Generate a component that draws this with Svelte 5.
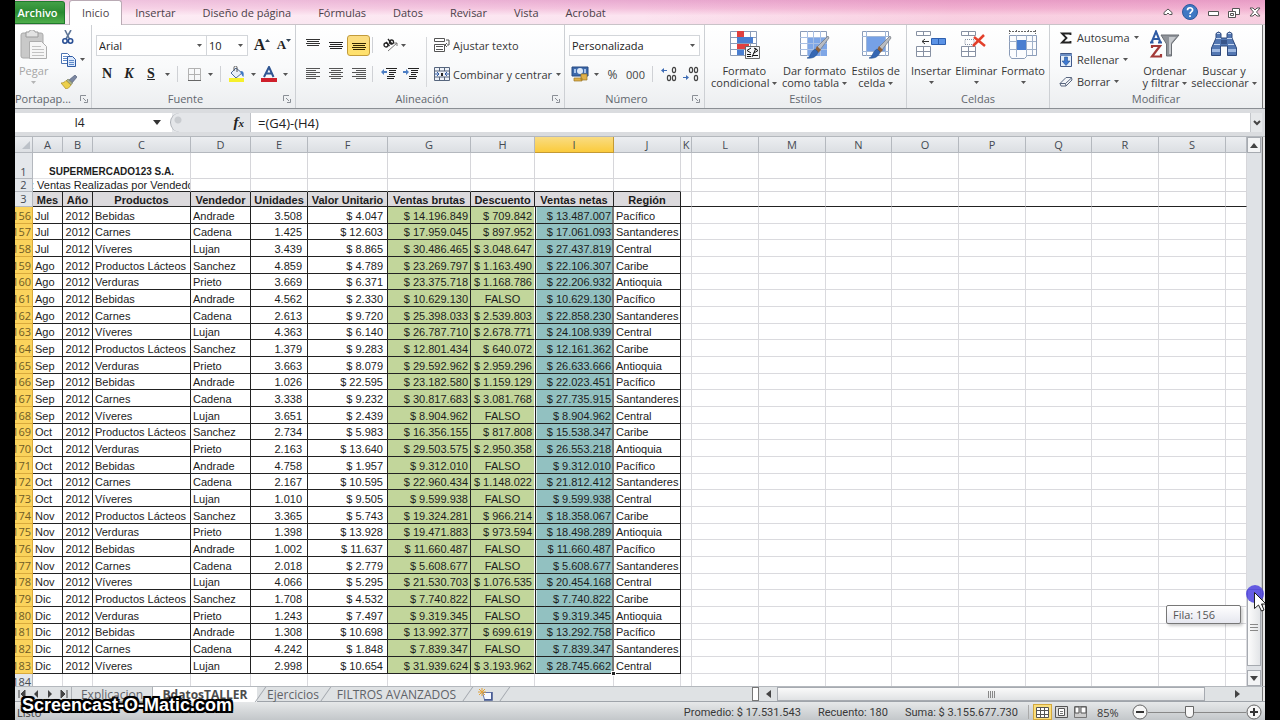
<script>
  const tabs = ['Insertar', 'Diseño de página', 'Fórmulas', 'Datos', 'Revisar', 'Vista', 'Acrobat'];
  const columns = 'ABCDEFGHIJKLMNOPQRS'.split('');
  const blanks = Array.from({ length: 10 });
  const headings = ['Mes', 'Año', 'Productos', 'Vendedor', 'Unidades', 'Valor Unitario', 'Ventas brutas', 'Descuento', 'Ventas netas', 'Región'];

  const products = {
    B: ['Bebidas', 'Andrade', 'Pacífico'],
    C: ['Carnes', 'Cadena', 'Santanderes'],
    V: ['Víveres', 'Lujan', 'Central'],
    L: ['Productos Lácteos', 'Sanchez', 'Caribe'],
    R: ['Verduras', 'Prieto', 'Antioquia']
  };

  const rows = `Jul|B|3.508|4.047|14.196.849|709.842|13.487.007
Jul|C|1.425|12.603|17.959.045|897.952|17.061.093
Jul|V|3.439|8.865|30.486.465|3.048.647|27.437.819
Ago|L|4.859|4.789|23.269.797|1.163.490|22.106.307
Ago|R|3.669|6.371|23.375.718|1.168.786|22.206.932
Ago|B|4.562|2.330|10.629.130||10.629.130
Ago|C|2.613|9.720|25.398.033|2.539.803|22.858.230
Ago|V|4.363|6.140|26.787.710|2.678.771|24.108.939
Sep|L|1.379|9.283|12.801.434|640.072|12.161.362
Sep|R|3.663|8.079|29.592.962|2.959.296|26.633.666
Sep|B|1.026|22.595|23.182.580|1.159.129|22.023.451
Sep|C|3.338|9.232|30.817.683|3.081.768|27.735.915
Sep|V|3.651|2.439|8.904.962||8.904.962
Oct|L|2.734|5.983|16.356.155|817.808|15.538.347
Oct|R|2.163|13.640|29.503.575|2.950.358|26.553.218
Oct|B|4.758|1.957|9.312.010||9.312.010
Oct|C|2.167|10.595|22.960.434|1.148.022|21.812.412
Oct|V|1.010|9.505|9.599.938||9.599.938
Nov|L|3.365|5.743|19.324.281|966.214|18.358.067
Nov|R|1.398|13.928|19.471.883|973.594|18.498.289
Nov|B|1.002|11.637|11.660.487||11.660.487
Nov|C|2.018|2.779|5.608.677||5.608.677
Nov|V|4.066|5.295|21.530.703|1.076.535|20.454.168
Dic|L|1.708|4.532|7.740.822||7.740.822
Dic|R|1.243|7.497|9.319.345||9.319.345
Dic|B|1.308|10.698|13.992.377|699.619|13.292.758
Dic|C|4.242|1.848|7.839.347||7.839.347
Dic|V|2.998|10.654|31.939.624|3.193.962|28.745.662`
    .split('\n')
    .map((line, i) => {
      const [month, key, units, price, gross, discount, net] = line.split('|');
      const [product, seller, region] = products[key];
      return { n: 156 + i, month, product, seller, region, units, price, gross, discount, net };
    });
</script>

{#snippet caret()}
  <svg class="caret" width="5" height="3" viewBox="0 0 5 3" aria-hidden="true"><path d="M0 0h5L2.5 3z" fill="#555" /></svg>
{/snippet}

{#snippet lines(spans, color)}
  <svg width="14" height="12" viewBox="0 0 14 12" aria-hidden="true">
    {#each spans as [x, y, w]}<rect {x} {y} width={w} height="1" fill={color} />{/each}
  </svg>
{/snippet}

{#snippet launcher(name)}
  <button class="launcher" aria-label={name}>
    <svg width="8" height="8" viewBox="0 0 8 8"><path d="M.5 6V.5H6M3 3l3 3M7.5 4v3.5H4" fill="none" stroke="#8a8f96" /></svg>
  </button>
{/snippet}

{#snippet sheetIcon(kind)}
  <svg width="32" height="30" viewBox="0 0 32 30" aria-hidden="true">
    <path d="M2.500 1.500h26v24h-26z" fill="#fff" stroke="#8b9cb8" />
    {#if kind === 'cond'}
      <path d="M2 7.500h27M2 13.500h27M2 19.500h27M9.500 1v25M15.500 1v25M22.500 1v25" stroke="#8b9cb8" />
      <path d="M9 1h7v6H9zM9 14h12v5H9z" fill="#e0403f" />
      <path d="M9 7h16v6H9zM9 20h7v5H9z" fill="#4a7ed0" />
      <path d="M17.500 16.500h14v12h-14z" fill="#f5f6f8" stroke="#666" />
      <path d="M23 18l-4 2.500 4 2.500M19 24.500h4M19 26.500h4M26 18l4 2.500-4 2.500M25 25.500h5M24 27l4-9" stroke="#111" fill="none" />
    {:else if kind === 'table'}
      <path d="M9 7h20v19H9z" fill="#7ea6e6" />
      <path d="M2 7.500h27M2 13.500h27M2 19.500h27M9.500 1v25M15.500 1v25M22.500 1v25" stroke="#a9c0e4" />
    {:else}
      <path d="M2 6.500h27M2 21.500h27M6.500 1v25M25.500 1v25" stroke="#9fb6d8" />
      <path d="M7 7h18v14H7z" fill="#76a1e6" />
    {/if}
    {#if kind !== 'cond'}
      <path d="M30 6l1 2-9 12-3-3z" fill="#b9bcc2" stroke="#70757d" stroke-width=".7" />
      <path d="M19 16l4 4-3 3-3-3z" fill="#8f6038" />
      <path d="M17 19l3 3c-1 4-5 7-11 6 4-1 3-6 8-9z" fill="#3567b3" stroke="#24508f" stroke-width=".6" />
    {/if}
  </svg>
{/snippet}

{#snippet cellIcon(kind)}
  <svg width="32" height="30" viewBox="0 0 32 30" aria-hidden="true">
    {#if kind === 'format'}
      <path d="M2.500 0v4M28.500 0v4M2 1.500h27M9.500 0v3M21.500 0v3" stroke="#666" stroke-dasharray="2 1" />
      <path d="M2.500 5.500h27v20h-9l-3 3h-13l-2-3z" fill="#fbfcfe" stroke="#8b9cb8" />
      <path d="M2 11.500h27M2 19.500h27M9.500 5v22M19.500 5v22M25.500 5v20" stroke="#9fb0c9" />
      <path d="M10 10h9v10h-9z" fill="#4a7ed0" />
    {:else}
      <path d="M1.500 1.500h14v4h-14zM1.500 16.500h14v10h-14zM1 21.500h15M8.500 1v5M8.500 16v11" fill="#fff" stroke="#8791a3" />
      {#if kind === 'insert'}
        <path d="M16.500 8.500h14v6h-14zM23.500 8v7" fill="#5b93e6" stroke="#2e5fae" />
        <path d="M7 11.500h7M10 9l-3 2.500 3 2.500" fill="none" stroke="#333" />
      {:else}
        <path d="M5 9.500h9v5H5z" fill="none" stroke="#8791a3" stroke-dasharray="1 1" />
        <path d="M14 7l11 9M24 5L13 16" stroke="#e3402b" stroke-width="2.500" />
      {/if}
    {/if}
  </svg>
{/snippet}

<div class="window">
  <header class="tabs">
    <button class="file">Archivo</button>
    <nav>
      <button class="tab active">Inicio</button>
      {#each tabs as tab}<button class="tab">{tab}</button>{/each}
    </nav>
    <div class="controls">
      <button aria-label="Minimizar la cinta"><svg width="10" height="8" viewBox="0 0 10 8"><path d="M1 6.500V4.500L5 1l4 3.500v2H6.500L5 5 3.500 6.500z" fill="#fff" stroke="#555" /></svg></button>
      <button aria-label="Ayuda"><svg width="16" height="16" viewBox="0 0 16 16"><circle cx="8" cy="8" r="7.500" fill="#3f78c3" stroke="#2e5a9c" /><path d="M5.500 6.200C5.500 3 10.600 3 10.600 6c0 2-2.500 1.800-2.500 4M8 11.300v1.700" fill="none" stroke="#fff" stroke-width="1.700" /></svg></button>
      <button aria-label="Minimizar"><svg width="12" height="10" viewBox="0 0 12 10"><path d="M1.500 4.500h10v4h-10z" fill="#fff" stroke="#555" /></svg></button>
      <button aria-label="Restaurar"><svg width="12" height="11" viewBox="0 0 12 11"><path d="M4.500 1.500h7v6h-7z" fill="#fff" stroke="#555" /><path d="M.5 4.500h7v6h-7z" fill="#fff" stroke="#555" /><path d="M2.500 6.500h3v2h-3z" stroke="#555" fill="none" /></svg></button>
      <button aria-label="Cerrar"><svg width="12" height="10" viewBox="0 0 12 10"><path d="M1 1h3l2 2 2-2h3L7.500 5 11 9H8L6 7 4 9H1l3.500-4z" fill="#fff" stroke="#555" /></svg></button>
    </div>
  </header>

  <section class="ribbon">
    <div class="group clipboard">
      <div class="body">
        <button class="big dim">
          <svg width="28" height="30" viewBox="0 0 28 30" aria-hidden="true"><rect x="1" y="3" width="22" height="25" rx="2" fill="#c9c9c9" stroke="#aaa" /><path d="M6 2h3c0-3 6-3 6 0h3v5H6z" fill="#e3e3e3" stroke="#9b9b9b" /><path d="M9.500 11.500h12l5 5v12h-17z" fill="#f6f6f6" stroke="#adadad" /><path d="M12 16.500h9M12 19.500h12M12 22.500h12M12 25.500h12" stroke="#c2c2c2" /></svg>
          <span>Pegar</span>{@render caret()}
        </button>
        <div class="stack clip">
          <button aria-label="Cortar"><svg width="14" height="15" viewBox="0 0 14 15"><path d="M4 0l4.500 9M10 0L5 9" stroke="#5f7697" stroke-width="1.600" /><circle cx="4" cy="11" r="2.200" fill="none" stroke="#294f94" stroke-width="1.600" /><circle cx="9.500" cy="11" r="2.200" fill="none" stroke="#294f94" stroke-width="1.600" /></svg></button>
          <button aria-label="Copiar"><svg width="15" height="14" viewBox="0 0 15 14"><path d="M.5.5h6l2 2v8h-8z" fill="#fff" stroke="#4d74b2" /><path d="M6.500 3.500h5l3 3v7h-8z" fill="#dbe8fb" stroke="#2f5ba4" /><path d="M2 3.500h4M2 5.500h4M2 7.500h4M8 7.500h5M8 9.500h5M8 11.500h5" stroke="#5f8ac9" /></svg>{@render caret()}</button>
          <button aria-label="Copiar formato"><svg width="16" height="14" viewBox="0 0 16 14"><path d="M14 0l2 2-5 6-3-3z" fill="#7a86a0" stroke="#4b5570" stroke-width=".6" /><path d="M7 4l4.500 4-1.500 2-5-4z" fill="#a9b08c" stroke="#777b55" stroke-width=".6" /><path d="M5 5.500L10 10c-1 2-3 3.500-5 4L0 8c2 0 4-1 5-2.500z" fill="#ecd04c" stroke="#a98c2a" stroke-width=".7" /></svg></button>
        </div>
      </div>
      <footer><span class="cut">Portapap...</span>{@render launcher('Portapapeles')}</footer>
    </div>

    <div class="group font">
      <div class="body rows">
        <div class="row">
          <label class="combo family"><select aria-label="Fuente"><option>Arial</option></select>{@render caret()}</label>
          <label class="combo size"><select aria-label="Tamaño"><option>10</option></select>{@render caret()}</label>
          <button class="tool serif grow" aria-label="Aumentar tamaño">A<svg width="5" height="12" viewBox="0 0 5 12"><path d="M0 3h5L2.500 0z" fill="#345" /></svg></button>
          <button class="tool serif shrink" aria-label="Disminuir tamaño">A<svg width="5" height="12" viewBox="0 0 5 12"><path d="M0 0h5L2.500 3z" fill="#345" /></svg></button>
        </div>
        <div class="row second">
          <button class="tool serif">N</button>
          <button class="tool serif italic">K</button>
          <button class="tool serif under">S</button>
          <span class="drop">{@render caret()}</span><i class="sep"></i>
          <button class="tool" aria-label="Bordes"><svg width="13" height="13" viewBox="0 0 13 13"><path d="M.5.5h12v12H.5zM6.500 0v12M0 6.500h12" fill="none" stroke="#b2b2b2" /><path d="M0 12.500h13" stroke="#666" /></svg></button>
          <span class="drop">{@render caret()}</span><i class="sep"></i>
          <button class="tool" aria-label="Color de relleno"><svg width="16" height="16" viewBox="0 0 16 16"><path d="M2 7l5-5 6 5-6 5z" fill="#e8eef7" stroke="#4e6b96" /><path d="M5 5V1.500c0-2 3-2 3 0V6" fill="none" stroke="#555" /><path d="M12 5c3 0 3 3 2.500 6-2-1-1.500-3-3-4z" fill="#3f78c3" /><path d="M0 12h15v4H0z" fill="#f6f02c" /></svg></button>
          <span class="drop">{@render caret()}</span>
          <button class="tool" aria-label="Color de fuente"><svg width="16" height="16" viewBox="0 0 16 16"><path d="M3 11L8 1l4.500 10M5 7.500h6" fill="none" stroke="#2f5592" stroke-width="2" /><path d="M0 12h16v4H0z" fill="#cf1f2b" /></svg></button>
          <span class="drop">{@render caret()}</span>
        </div>
      </div>
      <footer><span>Fuente</span>{@render launcher('Fuente')}</footer>
    </div>

    <div class="group align">
      <div class="body">
        <div class="rows">
          <div class="row">
            <button class="tool wide up" aria-label="Alinear arriba">{@render lines([[0, 1, 14], [1, 3, 12], [0, 5, 14], [1, 7, 12]], '#333')}</button>
            <button class="tool wide" aria-label="Alinear en el medio">{@render lines([[0, 3, 14], [1, 5, 12], [0, 7, 14], [1, 9, 12]], '#222')}</button>
            <button class="tool wide on" aria-label="Alinear abajo">{@render lines([[0, 4, 14], [1, 6, 12], [0, 8, 14], [1, 10, 12]], '#332600')}</button>
            <i class="sep slim"></i>
            <button class="tool orient" aria-label="Orientación"><svg width="16" height="14" viewBox="0 0 16 14"><path d="M5 13L14 5M14 5h-3M14 5v3" stroke="#777" fill="none" /><circle cx="3" cy="7" r="2" fill="none" stroke="#222" stroke-width="1.300" /><path d="M3 4l3.500 4M5 1l4 5" stroke="#222" stroke-width="1.300" /><circle cx="8.500" cy="4" r="2" fill="none" stroke="#222" stroke-width="1.300" /></svg>{@render caret()}</button>
          </div>
          <div class="row second">
            <button class="tool wide" aria-label="Izquierda">{@render lines([[0, 0, 14], [0, 2, 10], [0, 4, 14], [0, 6, 10], [0, 8, 14], [0, 10, 10]], '#555')}</button>
            <button class="tool wide" aria-label="Centrar">{@render lines([[0, 0, 14], [2, 2, 10], [0, 4, 14], [2, 6, 10], [0, 8, 14], [2, 10, 10]], '#555')}</button>
            <button class="tool wide" aria-label="Derecha">{@render lines([[0, 0, 14], [4, 2, 10], [0, 4, 14], [4, 6, 10], [0, 8, 14], [4, 10, 10]], '#555')}</button>
            <i class="sep slim"></i>
            {#each ['Disminuir sangría', 'Aumentar sangría'] as name, i}
              <button class="tool indent" aria-label={name}><svg width="16" height="14" viewBox="0 0 16 14"><path d="M5 1.500h11M8 3.500h7M8 5.500h7M8 7.500h5M6 9.500h8M6 11.500h7" stroke="#222" /><path d={i ? 'M0 4h3V2l3 3-3 3V6H0z' : 'M6 4H3V2L0 5l3 3V6h3z'} fill="#4c7ec4" /></svg></button>
            {/each}
          </div>
        </div>
        <i class="divider"></i>
        <div class="rows">
          <button class="row text"><svg width="16" height="16" viewBox="0 0 16 16" aria-hidden="true"><path d="M.5 1.500h10v3H.5zM.5 7.500h10v7H.5z" fill="#fff" stroke="#555" /><path d="M2 9.500h7M2 12.500h7M12 3h3v5h-2M13 6l-2 2 2 2" fill="none" stroke="#555" /></svg>Ajustar texto</button>
          <button class="row second text"><svg width="16" height="16" viewBox="0 0 16 16" aria-hidden="true"><path d="M.5 1.500h15v13H.5z" fill="#eef2f8" stroke="#56657d" /><path d="M5.500 1v4M10.500 1v4M5.500 11v4M10.500 11v4M0 5h16M0 11h16" stroke="#56657d" /><path d="M1 8h4M3 6l2 2-2 2M15 8h-4M13 6l-2 2 2 2" stroke="#2f5ba4" fill="none" /><path d="M7 7h2v3H7z" fill="#222" /></svg>Combinar y centrar<span class="drop">{@render caret()}</span></button>
        </div>
      </div>
      <footer><span>Alineación</span>{@render launcher('Alineación')}</footer>
    </div>

    <div class="group number">
      <div class="body rows">
        <div class="row"><label class="combo fmt"><select aria-label="Formato de número"><option>Personalizada</option></select>{@render caret()}</label></div>
        <div class="row second">
          <button class="tool" aria-label="Moneda"><svg width="18" height="16" viewBox="0 0 18 16"><path d="M1 1h16v9H1z" fill="#3d69ab" stroke="#264a82" /><ellipse cx="9" cy="5" rx="3" ry="3" fill="#dce8f8" /><path d="M3 3h2v4H3zM13 3h2v4h-2z" fill="#a9c4ea" /><path d="M10 8h6v6h-6zM3 12h8v3H3z" fill="#dfb04a" stroke="#9b7523" stroke-width=".7" /></svg></button>
          <span class="drop">{@render caret()}</span>
          <button class="tool wide percentage">%</button>
          <button class="tool wide thousands">000</button>
          <i class="sep"></i>
          {#each ['Aumentar decimales', 'Disminuir decimales'] as name, i}
            <button class="tool" aria-label={name}><svg width="16" height="16" viewBox="0 0 16 16"><path d={i ? 'M0 11h3V9l3 2.500L3 14v-2H0z' : 'M6 4H3V2L0 4.500 3 7V5h3z'} fill="#3e6cb5" /><g fill="none" stroke="#444" stroke-width="1.200"><ellipse cx="13" cy="4" rx="1.600" ry="2.600" /><ellipse cx="13" cy="12" rx="1.600" ry="2.600" />{#if i}<ellipse cx="8" cy="4" rx="1.600" ry="2.600" />{:else}<ellipse cx="8" cy="12" rx="1.600" ry="2.600" />{/if}</g></svg></button>
          {/each}
        </div>
      </div>
      <footer><span>Número</span>{@render launcher('Número')}</footer>
    </div>

    <div class="group styles">
      <div class="body">
        <button class="big">{@render sheetIcon('cond')}<span>Formato</span><span>condicional {@render caret()}</span></button>
        <button class="big">{@render sheetIcon('table')}<span>Dar formato</span><span>como tabla {@render caret()}</span></button>
        <button class="big">{@render sheetIcon('style')}<span>Estilos de</span><span>celda {@render caret()}</span></button>
      </div>
      <footer><span>Estilos</span></footer>
    </div>

    <div class="group cells">
      <div class="body">
        <button class="big">{@render cellIcon('insert')}<span>Insertar</span>{@render caret()}</button>
        <button class="big">{@render cellIcon('delete')}<span>Eliminar</span>{@render caret()}</button>
        <button class="big">{@render cellIcon('format')}<span>Formato</span>{@render caret()}</button>
      </div>
      <footer><span>Celdas</span></footer>
    </div>

    <div class="group edit">
      <div class="body">
        <div class="stack">
          <button><svg width="14" height="14" viewBox="0 0 14 14" aria-hidden="true"><path d="M11.500 4V2.500H3L7.500 7 3 11.500h8.500V10" fill="none" stroke="#222" stroke-width="1.800" /></svg>Autosuma {@render caret()}</button>
          <button><svg width="14" height="16" viewBox="0 0 14 16" aria-hidden="true"><path d="M1.500 1.500h11v13h-11z" fill="#e6effb" stroke="#41598a" /><path d="M1 2h12v2H1z" fill="#6d8fc4" /><path d="M5.500 5h3v4h2.500L7 13.500 3 9h2.500z" fill="#3f78d0" stroke="#24508f" stroke-width=".6" /></svg>Rellenar {@render caret()}</button>
          <button><svg width="14" height="14" viewBox="0 0 14 14" aria-hidden="true"><path d="M1 8.500L7 2.500h5.500L13 5l-6 6H2z" fill="#f3f5f8" stroke="#5a6780" /><path d="M1 8.500h5.500L12.500 3M6.500 8.500l.5 2.500" fill="none" stroke="#5a6780" /></svg>Borrar {@render caret()}</button>
        </div>
        <button class="big sort">
          <svg width="32" height="30" viewBox="0 0 32 30" aria-hidden="true"><path d="M12 5h18L22.500 14v12h-5V14z" fill="#8f9399" stroke="#6a6e74" /><path d="M20 7h7l-5 6v11h-2z" fill="#c7cace" /><path d="M2.500 12.500L7 1.500l4.500 11M4 9h6M1 12.500h3.500M9 12.500h4" fill="none" stroke="#2f5ba4" stroke-width="2" /><path d="M3 18v-2h8L3 26.500h9V24" fill="none" stroke="#a33a38" stroke-width="2.200" /></svg>
          <span>Ordenar</span><span>y filtrar {@render caret()}</span>
        </button>
        <button class="big find">
          <svg width="32" height="30" viewBox="0 0 32 30" aria-hidden="true"><path d="M8 3.500q2.500-3 5 0V8h6V3.500q2.500-3 5 0V8l4.500 10v7.500h-9V16h-7v9.500h-9V18L8 8z" fill="#5377b2" stroke="#2f4a7c" /><path d="M8 8.500h5M19 8.500h5M9 3.500h3M20 3.500h3M6 14.500h6M20 14.500h6" stroke="#c4d5ef" /><path d="M4 19h8v3H4zM20 19h8v3h-8z" fill="#9fb9e2" /><path d="M13 10h6v4h-6z" fill="#38558a" /></svg>
          <span>Buscar y</span><span>seleccionar {@render caret()}</span>
        </button>
      </div>
      <footer><span>Modificar</span></footer>
    </div>
    <div class="edge"></div>
  </section>

  <section class="formula">
    <label class="name"><input value="I4" aria-label="Cuadro de nombres" /><svg width="8" height="5" viewBox="0 0 8 5" aria-hidden="true"><path d="M0 0h8L4 5z" fill="#333" /></svg></label>
    <div class="fx"><i></i><button>f<small>x</small></button></div>
    <input class="expr" value="=(G4)-(H4)" aria-label="Barra de fórmulas" />
    <button class="expand" aria-label="Expandir"><svg width="8" height="6" viewBox="0 0 8 6"><path d="M1 1l3 3 3-3" fill="none" stroke="#444" stroke-width="2" /></svg></button>
  </section>

  <section class="sheet">
    <div class="grid">
      <table>
        <colgroup>
          <col class="rh" />
          {#each columns as c}<col class="c{c}" />{/each}
          <col />
        </colgroup>
        <thead>
          <tr>
            <th class="corner"><svg width="8" height="8" viewBox="0 0 8 8" aria-hidden="true"><path d="M8 0v8H0z" fill="#bcc1c8" /></svg></th>
            {#each columns as c}<th class:picked={c === 'I'}>{c}</th>{/each}
            <th></th>
          </tr>
        </thead>
        <tbody>
          <tr class="r1"><th>1</th><td colspan="3" class="title">SUPERMERCADO123 S.A.</td>{#each columns.slice(3) as c}<td></td>{/each}<td></td></tr>
          <tr class="r2"><th>2</th><td colspan="3" class="subtitle">: Ventas Realizadas por Vendedo</td>{#each columns.slice(3) as c}<td></td>{/each}<td></td></tr>
          <tr class="r3"><th>3</th>{#each headings as h}<td class="head">{h}</td>{/each}{#each blanks as b}<td></td>{/each}</tr>
        </tbody>
        <tbody class="data">
          {#each rows as r}
            <tr>
              <th><div>{r.n}</div></th>
              <td>{r.month}</td>
              <td class="num">2012</td>
              <td>{r.product}</td>
              <td>{r.seller}</td>
              <td class="num units">{r.units}</td>
              <td class="num price">$ {r.price}</td>
              <td class="num green">$ {r.gross}</td>
              <td class="num green" class:falso={!r.discount}>{r.discount ? `$ ${r.discount}` : 'FALSO'}</td>
              <td class="num teal">$ {r.net}</td>
              <td>{r.region}</td>
              {#each blanks as b}<td class="blank"></td>{/each}
            </tr>
          {/each}
          <tr class="after"><th><div>184</div></th>{#each headings as h}<td class="blank"></td>{/each}{#each blanks as b}<td class="blank"></td>{/each}</tr>
        </tbody>
      </table>
      <span class="handle"></span>
    </div>
    <div class="vscroll">
      <button aria-label="Subir"><svg width="8" height="5" viewBox="0 0 8 5"><path d="M0 5h8L4 0z" fill="#444" /></svg></button>
      <div class="track"><div class="thumb"><i></i><i></i><i></i></div></div>
      <button aria-label="Bajar"><svg width="8" height="5" viewBox="0 0 8 5"><path d="M0 0h8L4 5z" fill="#444" /></svg></button>
    </div>
    <div class="edge"></div>
    <div class="tip">Fila: 156</div>
    <svg class="pointer" width="22" height="28" viewBox="0 0 22 28" aria-hidden="true"><circle cx="11" cy="9" r="9" fill="#4338e0" opacity=".8" /><path d="M10.500 7.500v16l4-3.500 3 6 2.500-1-2.500-6H22z" fill="#fff" stroke="#222" /></svg>
  </section>

  <section class="books">
    <div class="nav">
      {#each ['M1 1v8M7 1L3 5l4 4z', 'M6 1L2 5l4 4z', 'M2 1l4 4-4 4z', 'M7 1v8M1 1l4 4-4 4z'] as d, i}
        <button aria-label={['Primera', 'Anterior', 'Siguiente', 'Última'][i]}><svg width="8" height="10" viewBox="0 0 8 10"><path {d} fill="#444" stroke={i % 3 ? 'none' : '#444'} /></svg></button>
      {/each}
    </div>
    <button class="book first">Explicacion</button>
    <button class="book current">BdatosTALLER</button>
    <i class="slash"></i>
    <button class="book third">Ejercicios</button>
    <i class="slash"></i>
    <button class="book fourth">FILTROS AVANZADOS</button>
    <i class="slash"></i>
    <button class="new" aria-label="Insertar hoja"><svg width="16" height="13" viewBox="0 0 16 13"><path d="M4.500 4.500h9v7h-7z" fill="#f5f8ff" stroke="#6477ad" /><path d="M14 4v8H6" stroke="#42558e" fill="none" stroke-width="1.500" /><path d="M4 0v8M0 4h8M1 1l6 6M7 1L1 7" stroke="#e0a23a" /></svg></button>
    <i class="slash"></i>
    <div class="space"></div>
    <div class="hscroll">
      <i class="split"></i>
      <button aria-label="Izquierda"><svg width="5" height="8" viewBox="0 0 5 8"><path d="M5 0v8L0 4z" fill="#444" /></svg></button>
      <div class="hthumb"><i></i><i></i><i></i><i></i></div>
      <button class="right" aria-label="Derecha"><svg width="5" height="8" viewBox="0 0 5 8"><path d="M0 0v8l5-4z" fill="#444" /></svg></button>
    </div>
    <div class="edge"></div>
  </section>

  <footer class="status">
    <span class="ready">Listo</span>
    <div class="figures"><span>Promedio: $ 17.531.543</span><span>Recuento: 180</span><span>Suma: $ 3.155.677.730</span></div>
    <i class="sep"></i>
    <button class="view on" aria-label="Normal"><svg width="13" height="11" viewBox="0 0 13 11"><path d="M.5.500h12v10H.500zM0 3.500h13M0 7.500h13M4.500 0v11M8.500 0v11" fill="#fff" stroke="#555" /></svg></button>
    <button class="view" aria-label="Diseño de página"><svg width="13" height="12" viewBox="0 0 13 12"><path d="M.5.500h12v11H.500z" fill="#ddd" stroke="#555" /><path d="M3.500 2.500h6v7h-6z" fill="#fff" stroke="#555" /><path d="M5 5.500h3M5 7.500h3" stroke="#777" /></svg></button>
    <button class="view" aria-label="Salto de página"><svg width="13" height="12" viewBox="0 0 13 12"><path d="M.5.500h12v11H.500z" fill="#ccc" stroke="#777" /><path d="M1 1h4v6H1zM7 1h5v6H7z" fill="#fff" stroke="#555" /></svg></button>
    <span class="percent">85%</span>
    <button class="round" aria-label="Alejar"><svg width="16" height="16" viewBox="0 0 16 16"><circle cx="8" cy="8" r="7" fill="#f6f6f6" stroke="#666" /><path d="M4 8h8" stroke="#333" stroke-width="2" /></svg></button>
    <input class="zoom" type="range" min="0" max="100" value="42" aria-label="Zoom" />
    <button class="round" aria-label="Acercar"><svg width="16" height="16" viewBox="0 0 16 16"><circle cx="8" cy="8" r="7" fill="#f6f6f6" stroke="#666" /><path d="M4 8h8M8 4v8" stroke="#333" stroke-width="2" /></svg></button>
  </footer>
  <div class="mark">Screencast-O-Matic.com</div>
</div>

<style>
  :global(body) { background: #000; }
  .window {
    position: relative;
    display: flex;
    flex-direction: column;
    height: 100vh;
    margin: 0 15px;
    overflow: hidden;
    box-sizing: border-box;
    background: #dfe1e4;
    color: #383838;
    font: 11px/13px 'Open Sans', 'Noto Sans', sans-serif;
  }
  .window *, .window *::before { box-sizing: border-box; }
  button, input, select { margin: 0; padding: 0; border: 0; background: none; color: inherit; font: inherit; appearance: none; outline: 0; border-radius: 0; }
  button { display: flex; align-items: center; justify-content: center; white-space: nowrap; }
  svg { flex: none; display: block; }
  .edge { flex: none; width: 3px; background: #e9e9e9; border-left: 1px solid #777; }

  /* tab strip */
  .tabs {
    flex: none;
    display: flex;
    height: 25px;
    border-bottom: 1px solid #c9c3c8;
    background:
      linear-gradient(90deg, rgba(255, 255, 255, .35), rgba(255, 255, 255, 0) 50%, rgba(226, 60, 120, .12) 75%),
      linear-gradient(#e8a9d0, #f3c0dc 35%, #fce4f0 65%, #f9e2ee);
  }
  .file { width: 50px; height: 23px; margin-top: 1px; padding-right: 4px; background: linear-gradient(#43a047, #2a8a31 50%, #4fae4b); border: 1px solid #1f7a2c; border-left: 0; border-radius: 0 3px 0 0; color: #fff; font-weight: 600; }
  nav { display: flex; flex: 1; margin-left: 4px; }
  .tab { padding: 1px 14px 0 13px; color: #4c3f49; }
  .tab.active { height: 25px; padding: 0 12px 1px; background: #fff; border: 1px solid #b9aab4; border-bottom: 0; border-radius: 3px 3px 0 0; }
  .controls { display: flex; align-items: center; gap: 9px; padding-right: 4px; }

  /* ribbon */
  .ribbon { flex: none; display: flex; height: 84px; background: linear-gradient(#fff, #f9fafb 50%, #eceef0); border-bottom: 1px solid #8b8f94; }
  .group { flex: none; display: flex; flex-direction: column; border-right: 1px solid #cdd0d4; }
  .body { display: flex; flex: 1; }
  .group footer { display: flex; height: 16px; color: #62676e; }
  .group footer span { flex: 1; text-align: center; white-space: nowrap; }
  .launcher { width: 16px; height: 14px; }
  .clipboard { width: 77px; }
  .font { width: 204px; }
  .align { width: 269px; }
  .number { width: 140px; }
  .styles { width: 202px; }
  .cells { width: 143px; }
  .edit { flex: 1; border-right: 0; }
  .group footer .cut { display: flex; justify-content: flex-end; padding-right: 6px; }
  .big { flex-direction: column; justify-content: flex-start; padding: 5px 4px 0; line-height: 12px; }
  .big > svg:first-child { margin-bottom: 5px; }
  .big span { display: flex; align-items: center; gap: 3px; }
  .big > .caret { margin-top: 4px; }
  .dim { color: #a5a5a5; }
  .dim .caret { opacity: .4; }
  .styles .body { justify-content: space-between; padding: 0 6px; }
  .styles .big { padding-left: 0; padding-right: 0; }
  .cells .body { justify-content: space-evenly; }
  .cells .big { padding-left: 0; padding-right: 0; }
  .stack { display: flex; flex-direction: column; gap: 5px; padding: 4px 0 0 9px; }
  .stack button { height: 17px; gap: 4px; justify-content: flex-start; }
  .edit .big { padding-left: 2px; padding-right: 2px; }
  .edit .sort { margin-left: 2px; }
  .rows { display: flex; flex-direction: column; padding-top: 10px; }
  .row { display: flex; align-items: center; height: 20px; }
  .row.second { height: 22px; margin-top: 8px; }
  .font .row, .number .row { padding-left: 4px; }
  .tool { width: 22px; height: 21px; color: #222; }
  .wide { width: 23px; }
  .up { padding-bottom: 2px; }
  .wide.on { background: linear-gradient(#fbdc83, #ffe16a); border: 1px solid #c29b3b; border-radius: 3px; }
  .drop { display: flex; justify-content: center; width: 10px; }
  .sep { flex: none; width: 11px; height: 16px; border-left: 1px solid #cfd1d5; border-right: 0; margin-left: 5px; margin-right: -5px; }
  .sep.slim { width: 6px; margin: 0 0 0 2px; }
  .orient { width: 32px; gap: 2px; }
  .align .body > .rows:first-child { width: 130px; padding-left: 5px; }
  .divider { width: 1px; height: 50px; margin: 12px 7px 0 0; background: #d6d8db; }
  .text { gap: 3px; justify-content: flex-start; }
  .text .drop { width: 6px; }
  .serif { font: bold 14px 'Liberation Serif', serif; }
  .italic { font-style: italic; }
  .under { text-decoration: underline; }
  .grow { font-size: 16px; margin-left: 3px; }
  .shrink { font-size: 13px; }
  .combo { display: grid; height: 21px; background: #fff; border: 1px solid #d3d6da; color: #222; }
  .combo select { grid-area: 1 / 1; width: 100%; padding-left: 2px; }
  .combo .caret { grid-area: 1 / 1; align-self: center; justify-self: end; margin-right: 4px; pointer-events: none; }
  .family { width: 111px; }
  .size { width: 41px; border-left: 0; }
  .fmt { width: 131px; }
  .number .wide { width: 23px; color: #444; }
  .number .percentage { font-size: 12px; }

  /* formula bar */
  .formula { flex: none; display: flex; height: 28px; padding: 4px 3px 4px 0; background: #dadcdf; border-bottom: 1px solid #b4b8bd; color: #222; font-size: 12px; }
  .name { display: flex; align-items: center; width: 152px; padding-right: 6px; background: #fff; }
  .name input { flex: 1; min-width: 0; padding-right: 9px; text-align: center; }
  .fx { display: flex; align-items: center; justify-content: space-between; width: 84px; padding: 0 6px 0 3px; background: linear-gradient(90deg, #fff 5px, transparent 5px), #e4e6e9; border-right: 1px solid #c0c3c8; }
  .fx i { width: 12px; height: 19px; border-left: 1px solid #a9adb3; border-radius: 10px 0 0 10px; background: radial-gradient(circle at 7px 7px, #c9ccd0 3px, #e4e6e9 4px); }
  .fx button { font: italic bold 15px 'Liberation Serif', serif; }
  .fx small { font-size: 11px; }
  .expr { flex: 1; min-width: 0; padding-left: 7px; background: #fff; font-size: 13px; }
  .expand { width: 12px; background: #e6e8ea; border-left: 1px solid #c4c7cb; }

  /* worksheet */
  .sheet { position: relative; flex: 1; display: flex; min-height: 0; border-top: 0; }
  .grid { position: relative; flex: 1; min-width: 0; overflow: hidden; background: #fff; }
  table { width: 100%; table-layout: fixed; border-collapse: separate; border-spacing: 0; color: #1c1c1c; font: 11px/13px 'Liberation Sans', sans-serif; }
  .rh { width: 18px; }
  .cA, .cB { width: 30px; }
  .cC { width: 98px; }
  .cD { width: 60px; }
  .cE { width: 57px; }
  .cF { width: 80px; }
  .cG { width: 83px; }
  .cH { width: 64px; }
  .cI { width: 79px; }
  .cJ { width: 67px; }
  .cK { width: 11px; }
  .cL, .cM, .cO, .cP, .cR, .cS { width: 67px; }
  .cN, .cQ { width: 66px; }
  th, td { padding: 0 2px; overflow: hidden; white-space: nowrap; border: solid #d6d6da; border-width: 0 1px 1px 0; }
  th { padding: 0; color: #444a52; background: #e4e7eb; font: 11px/13px 'Open Sans', 'Noto Sans', sans-serif; border-color: #b4b8be; }
  thead tr { height: 16px; }
  thead th { background: linear-gradient(#eceef1, #dcdfe3); }
  thead .picked { background: linear-gradient(#f9dc83, #fbcb3c); border-color: #c49a34; }
  .corner svg { margin-left: 7px; }
  .r1 { height: 26px; }
  .r1 th, .r1 td { vertical-align: bottom; }
  .title { font-weight: bold; font-size: 10px; text-align: center; border-bottom-color: #e3e3e6; }
  .r2 { height: 13px; }
  .r2 th, .r2 td { line-height: 12px; }
  .subtitle { padding: 0; text-indent: -2px; }
  .r2 td:nth-child(-n + 9) { border-bottom-color: #222; }
  .r3 { height: 15px; }
  .r3 td { border-bottom-color: #222; }
  .r3 th { line-height: 14px; }
  .r3 .head { padding: 2px 0 0; text-align: center; font-weight: bold; line-height: 12px; background: #dcdadd; border-color: #222; }
  .data tr { height: 17px; }
  .data tr:nth-child(3n + 2) { height: 16px; }
  .data td { padding-top: 2px; }
  .data th { background: #fbd35c; border-color: #d9aa3c; color: #6f5c26; }
  .data th div { display: flex; justify-content: flex-end; padding-right: 1px; }
  .data td { border-color: #222; }
  .data .blank { border-color: #dadade; }
  .num { text-align: right; }
  .data .units { padding-right: 5px; }
  .data .price { padding-right: 4px; }
  .data .green { background: #c2d69b; }
  .data .falso { text-align: center; }
  .data .teal { background: #92c1c1; border-left: 1px solid #222; border-right: 2px solid #777; box-shadow: inset 1px 0 #d8ecec; padding-right: 1px; }
  .data .green + .green { border-right-color: #fff; }
  .data .after th { background: #e4e7eb; border-color: #b4b8be; color: #444a52; }
  .handle { position: absolute; left: 596px; top: 534px; width: 5px; height: 5px; background: #222; border: 1px solid #fff; }

  .vscroll { flex: none; display: flex; flex-direction: column; width: 15px; background: #dfe2e6; border-right: 1px solid #c4c7cb; }
  .vscroll button { flex: none; height: 16px; background: #f3f4f5; border: 1px solid #a6aab0; }
  .track { flex: 1; display: flex; flex-direction: column; justify-content: flex-end; padding-bottom: 4px; }
  .thumb { display: flex; flex-direction: column; align-items: center; justify-content: center; gap: 2px; height: 15%; background: linear-gradient(90deg, #fcfcfc, #e3e5e8); border: 1px solid #a6aab0; }
  .thumb i { width: 8px; height: 1px; background: #888; }
  .tip { position: absolute; right: 24px; bottom: 62px; width: 75px; height: 19px; padding: 2px 6px; background: linear-gradient(#fff, #e6e7ef); border: 1px solid #777; border-radius: 2px; box-shadow: 2px 2px 3px rgba(0, 0, 0, .2); color: #555; font-size: 11px; }
  .pointer { position: absolute; right: -1px; bottom: 73px; }

  /* sheet tabs */
  .books { flex: none; display: flex; height: 16px; background: #dfe2e4; border-top: 1px solid #b4b8bd; border-bottom: 1px solid #9fa4aa; color: #5f6368; font-size: 12px; }
  .nav { display: flex; width: 56px; }
  .nav button { width: 14px; }
  .book { height: 15px; line-height: 14px; }
  .first { width: 82px; border-left: 1px solid #aeb2b7; border-right: 1px solid #aeb2b7; }
  .current { width: 104px; background: #fff; color: #4c4c4c; font-weight: bold; }
  .third { width: 58px; }
  .fourth { width: 135px; }
  .slash { flex: none; width: 1px; height: 15px; margin: 0 3px; background: #a0a5ab; transform: skewX(-35deg); }
  .new { width: 30px; }
  .space { flex: 1; }
  .hscroll { display: flex; width: 510px; }
  .split { width: 7px; background: #fff; border: 1px solid #777; }
  .hscroll button { width: 18px; }
  .hthumb { flex: 1; display: flex; align-items: center; justify-content: center; gap: 1px; background: linear-gradient(#fafafa, #e0e2e4); border: 1px solid #a6aab0; }
  .hthumb i { width: 1px; height: 7px; background: #888; }
  .hscroll .right { width: 57px; padding-left: 8px; }

  /* status bar */
  .status { flex: none; display: flex; align-items: center; height: 18px; padding: 2px 3px 0 2px; background: linear-gradient(#e6e8e9, #c3c7ca); color: #383838; }
  .ready { flex: 1; }
  .figures { display: flex; gap: 17px; font-family: Roboto, sans-serif; }
  .status .sep { height: 14px; margin: 0 -6px 0 10px; border-color: #aaa; }
  .view { width: 19px; height: 16px; }
  .view.on { background: #fbdf7c; border: 1px solid #d3a83c; }
  .percent { width: 42px; padding-left: 7px; }
  .round { width: 16px; height: 16px; }
  .zoom { width: 98px; height: 14px; background: linear-gradient(#888, #888) center / 100% 1px no-repeat; }
  .zoom::-webkit-slider-thumb { appearance: none; width: 9px; height: 12px; background: #f8f8f8; border: 1px solid #666; border-radius: 1px 1px 5px 5px; }
  .mark {
    position: absolute;
    left: 7px;
    bottom: 4px;
    color: #fff;
    font: bold 18px/22px 'Liberation Sans', sans-serif;
    text-shadow: 2px 0 #000, -2px 0 #000, 0 2px #000, 0 -2px #000, 2px 2px #000, -2px -2px #000, 2px -2px #000, -2px 2px #000, 0 0 3px #000;
  }
</style>
